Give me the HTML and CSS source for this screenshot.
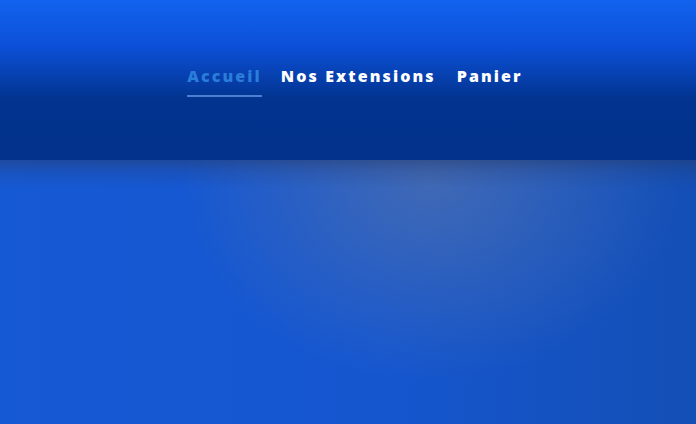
FILE: index.html
```html
<!DOCTYPE html>
<html lang="fr">
<head>
<meta charset="utf-8">
<title>Accueil</title>
<link rel="stylesheet" href="styles.css">
</head>
<body>
<header class="site-header">
  <nav class="nav">
    <a class="nav-link active" href="#">Accueil</a>
    <a class="nav-link" href="#">Nos Extensions</a>
    <a class="nav-link" href="#">Panier</a>
  </nav>
</header>
<main class="hero"></main>
</body>
</html>
```

FILE: styles.css
```css
html, body {
  margin: 0;
  padding: 0;
  height: 100%;
}
body {
  font-family: "Open Sans", "DejaVu Sans", sans-serif;
  background: #1453c8;
  overflow: hidden;
}
.site-header {
  height: 160px;
  background: linear-gradient(to bottom, #1263f0 0%, #0c4fd6 30%, #02348f 62%, #01318b 100%);
  display: flex;
  justify-content: center;
  box-sizing: border-box;
  padding-top: 62px;
  padding-left: 14px;
}
.nav {
  display: flex;
  gap: 21px;
  height: 34px;
}
.nav-link {
  color: #ffffff;
  text-decoration: none;
  font-weight: 800;
  font-size: 16px;
  letter-spacing: 2.1px;
  line-height: 28px;
  height: 35px;
  box-sizing: border-box;
}
.nav-link.active {
  color: #2a7dd9;
  border-bottom: 2px solid #4a7fd2;
  margin-right: -2px;
}
.hero {
  height: 264px;
  background:
    linear-gradient(to bottom, rgba(40, 55, 95, 0.45) 0, rgba(40, 55, 95, 0.18) 12px, rgba(40, 55, 95, 0) 28px),
    radial-gradient(ellipse 250px 200px at 430px 20px, rgba(75, 110, 175, 0.8) 0%, rgba(75, 110, 175, 0.45) 45%, rgba(75, 110, 175, 0) 100%),
    linear-gradient(to right, #1659d4 0%, #1556cf 55%, #144fb5 100%);
}
```
